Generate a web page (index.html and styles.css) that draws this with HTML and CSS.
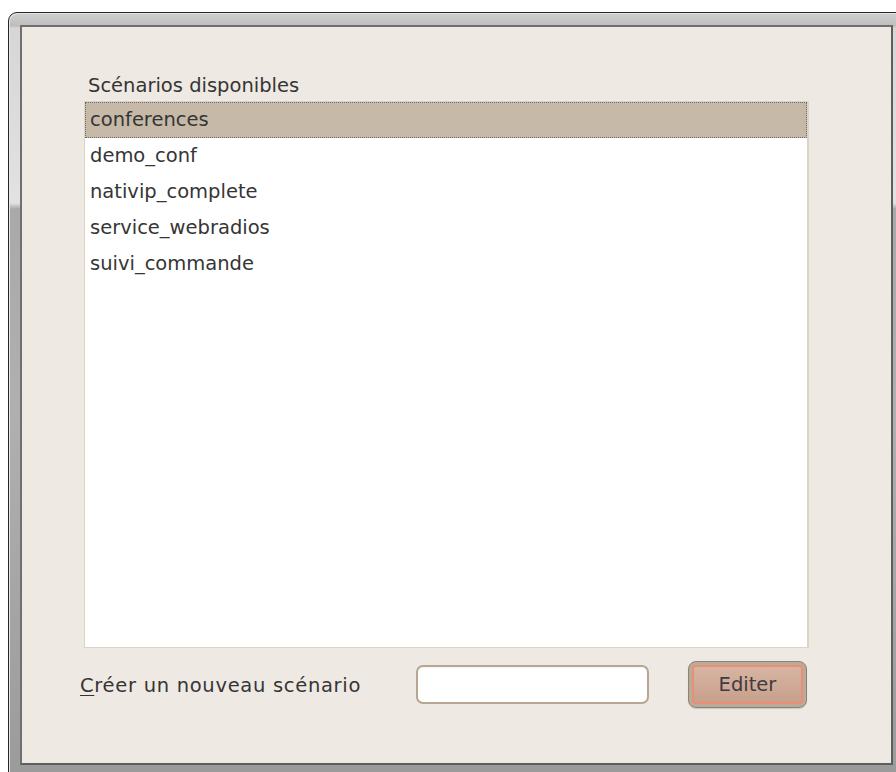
FILE: index.html
```html
<!DOCTYPE html>
<html lang="fr">
<head>
<meta charset="utf-8">
<title>Scénarios</title>
<link rel="stylesheet" href="styles.css">
</head>
<body>
<div class="window">
  <div class="panel">
    <div class="scenarios">
      <div class="list-label">Scénarios disponibles</div>
      <ul class="listbox">
        <li class="item selected">conferences</li>
        <li class="item">demo_conf</li>
        <li class="item">nativip_complete</li>
        <li class="item">service_webradios</li>
        <li class="item">suivi_commande</li>
      </ul>
    </div>
    <div class="create-row">
      <label class="create-label" for="scenario-name"><u>C</u>réer un nouveau scénario</label>
      <input class="name-input" id="scenario-name" type="text">
      <button class="edit-btn" type="button">Editer</button>
    </div>
  </div>
</div>
</body>
</html>
```
FILE: styles.css
```css
html, body {
  margin: 0;
  padding: 0;
  background: #ffffff;
  overflow: hidden;
  width: 896px;
  height: 772px;
}

body {
  font-family: "DejaVu Sans", Verdana, sans-serif;
  font-size: 19.5px;
  color: #353535;
}

/* window frame */
.window {
  margin: 12px 0 0 8px;
  width: 900px;
  height: 780px;
  box-sizing: border-box;
  border: 1px solid #262626;
  border-radius: 9px 0 0 0;
  padding: 12px 0 0 11px;
  background:
    linear-gradient(to bottom, #c2c2c2 0, #cdcdcd 2px, #bdbdbd 13px, #d6d6d6 15px, #e2e2e2 190px, #a9a9a9 196px, #b0b0b0 400px, #9a9a9a 100%);
  box-shadow: inset 1px 1px 0 #e6e6e6;
}

.panel {
  width: 869px;
  height: 736px;
  border: 2px solid #6f6f6f;
  border-right-color: #5e5e5e;
  border-bottom-color: #5e5e5e;
  background: #efe9e3;
}

/* list of scenarios */
.scenarios {
  margin-left: 62px;
  padding-top: 48px;
  width: 725px;
}

.list-label {
  line-height: 22px;
  margin-left: 4px;
  margin-bottom: 4px;
}

.listbox {
  list-style: none;
  margin: 0;
  padding: 0;
  height: 547px;
  box-sizing: border-box;
  border: 1px solid #ddd3c6;
  border-right-width: 2px;
  background: #ffffff;
}

.item {
  height: 36px;
  line-height: 36px;
  padding-left: 5px;
  box-sizing: border-box;
  white-space: nowrap;
}

.item.selected {
  line-height: 34px;
  background: #c6b9a7;
  border: 1px dotted #6c6c74;
  padding-left: 4px;
}

/* create row */
.create-row {
  display: flex;
  align-items: center;
  margin-top: 13px;
  margin-left: 58px;
  height: 47px;
}

.create-label {
  width: 336px;
  line-height: 22px;
  padding-top: 3px;
  letter-spacing: 0.7px;
  white-space: nowrap;
}

.create-label u {
  text-decoration-thickness: 1px;
  text-underline-offset: 3px;
}

.name-input {
  width: 233px;
  height: 39px;
  box-sizing: border-box;
  margin: 0 39px 0 0;
  padding: 0 6px;
  border: 2px solid #b7a691;
  border-radius: 7px;
  background: #ffffff;
  font: inherit;
  box-shadow: inset 0 1px 1px rgba(0, 0, 0, 0.05);
}

.edit-btn {
  width: 119px;
  height: 47px;
  box-sizing: border-box;
  padding: 0;
  border: 1px solid #8f8273;
  border-radius: 8px;
  background: linear-gradient(to bottom, #d8b8a5 0, #cfa995 55%, #c59e8a 100%);
  box-shadow:
    inset 0 0 0 3px #b9ab99,
    inset 0 0 0 5px #ea8e78,
    0 1px 1px rgba(0, 0, 0, 0.15);
  font: inherit;
  color: #3d3c42;
  line-height: 22px;
}
```
